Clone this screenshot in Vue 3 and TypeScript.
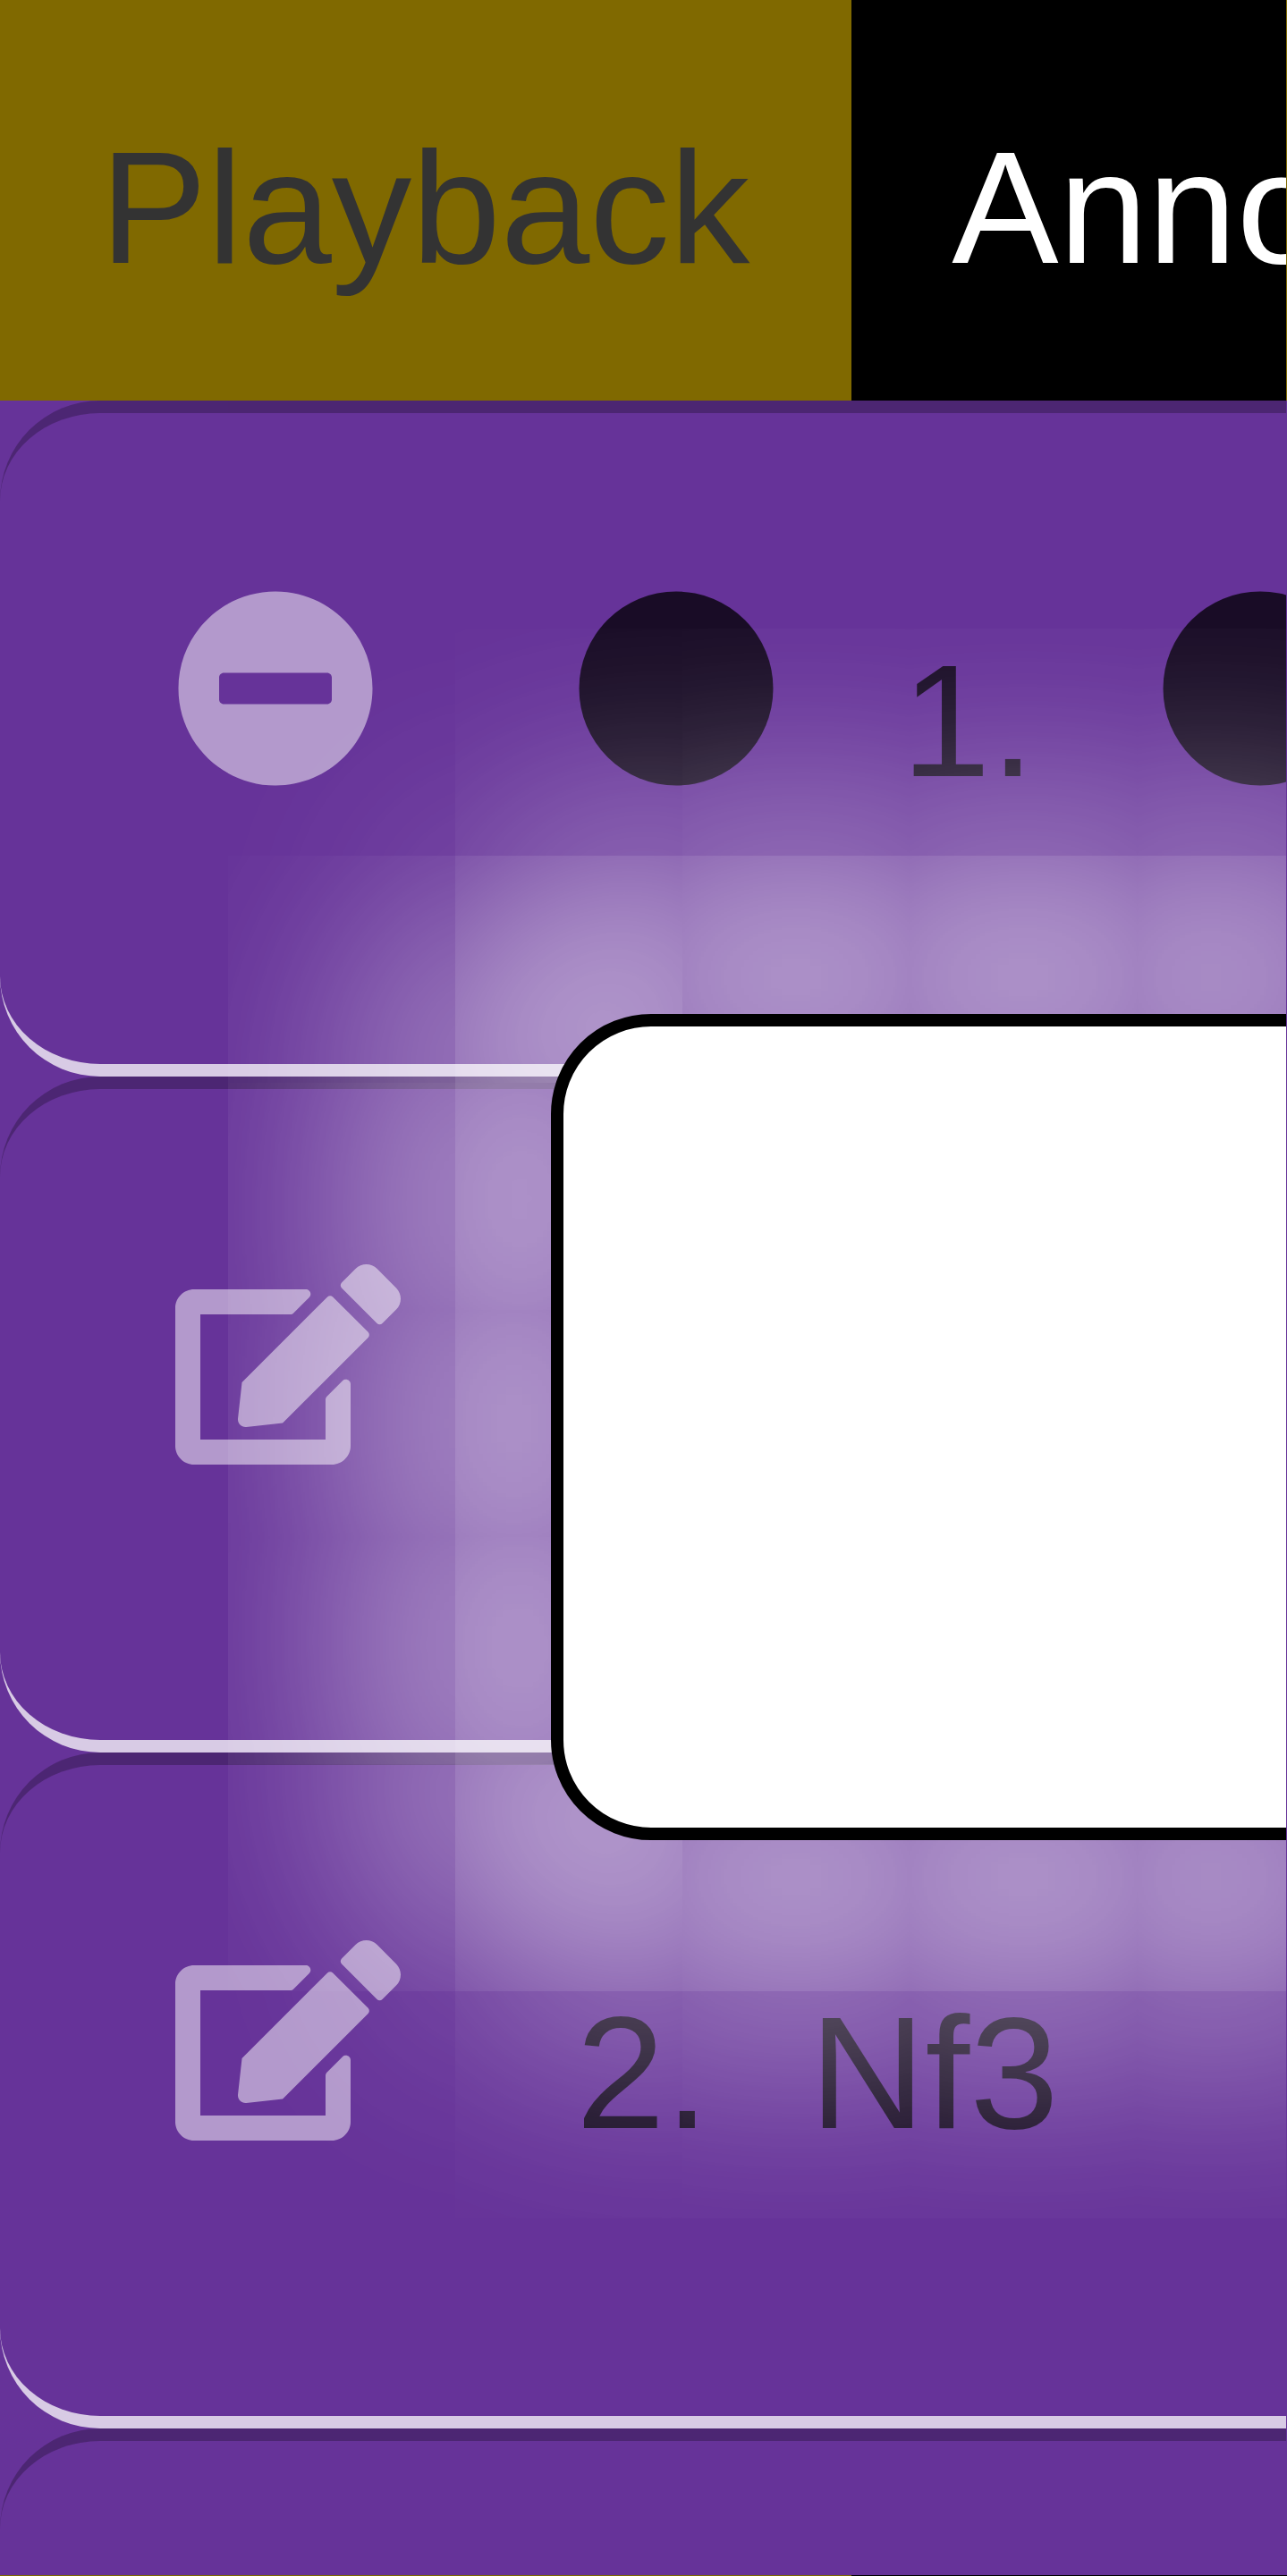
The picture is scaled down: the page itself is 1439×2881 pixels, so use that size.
<script setup lang="ts">
type Token = { kind: 'dot' } | { kind: 'text'; text: string }
interface Row {
  id: number
  icon: 'minus' | 'edit' | null
  wide?: boolean
  tokens: Token[]
}

const rows: Row[] = [
  { id: 1, icon: 'minus', wide: true, tokens: [{ kind: 'dot' }, { kind: 'text', text: '1.' }, { kind: 'dot' }] },
  { id: 2, icon: 'edit', tokens: [] },
  { id: 3, icon: 'edit', tokens: [{ kind: 'text', text: '2.' }, { kind: 'text', text: 'Nf3' }] },
  { id: 4, icon: null, tokens: [] },
]
</script>

<template>
  <main class="page">
    <nav class="tabs">
      <button class="tab" type="button">Playback</button>
      <button class="tab active" type="button">Annotate</button>
    </nav>
    <section class="panel">
      <div v-for="row in rows" :key="row.id" class="row">
        <div class="tool">
          <button v-if="row.icon === 'minus'" type="button" aria-label="Collapse">
            <svg class="icon" viewBox="0 0 512 512">
              <path d="M256 8C119 8 8 119 8 256s111 248 248 248 248-111 248-248S393 8 256 8zM124 296c-6.600 0-12-5.400-12-12v-56c0-6.600 5.400-12 12-12h264c6.600 0 12 5.400 12 12v56c0 6.600-5.400 12-12 12H124z" />
            </svg>
          </button>
          <button v-else-if="row.icon === 'edit'" type="button" aria-label="Edit">
            <svg class="icon" viewBox="0 0 576 512">
              <path d="M402.600 83.200l90.200 90.200c3.800 3.800 3.800 10 0 13.800L274.400 405.600l-92.800 10.300c-12.400 1.400-22.900-9.100-21.500-21.500l10.300-92.800L388.800 83.200c3.800-3.800 10-3.800 13.800 0zm162-22.900l-48.800-48.800c-15.200-15.200-39.900-15.200-55.200 0l-35.400 35.400c-3.800 3.800-3.800 10 0 13.800l90.200 90.200c3.800 3.800 10 3.800 13.800 0l35.400-35.400c15.200-15.300 15.200-40 0-55.200zM384 346.200V448H64V128h229.800c3.200 0 6.200-1.300 8.500-3.500l40-40c7.600-7.600 2.200-20.500-8.500-20.500H48C21.500 64 0 85.500 0 112v352c0 26.500 21.500 48 48 48h352c26.500 0 48-21.500 48-48V306.200c0-10.700-12.900-16-20.500-8.500l-40 40c-2.200 2.300-3.500 5.300-3.500 8.500z" />
            </svg>
          </button>
        </div>
        <div class="moves" :class="{ wide: row.wide }">
          <template v-for="(token, i) in row.tokens" :key="i">
            <svg v-if="token.kind === 'dot'" class="icon dot" viewBox="0 0 512 512">
              <circle cx="256" cy="256" r="248" />
            </svg>
            <span v-else>{{ token.text }}</span>
          </template>
        </div>
      </div>
      <div class="glow"></div>
      <div class="popup" role="dialog"></div>
    </section>
    <div class="strip"></div>
  </main>
</template>

<style>
body {
  margin: 0;
  background: #663399;
}
</style>

<style scoped>
.page {
  display: flex;
  flex-direction: column;
  height: 100vh;
  overflow: hidden;
  background: #663399;
  font-family: "Liberation Sans", Arial, sans-serif;
  font-size: 179px;
  line-height: 296px;
}
button {
  margin: 0;
  padding: 0;
  border: 0;
  background: none;
  color: inherit;
  font: inherit;
}
.tabs {
  display: flex;
  flex: none;
  height: 448px;
  border-right: 1px solid #806900;
  overflow: hidden;
}
.tab {
  flex: none;
  padding: 16px 114px 0 112px;
  background: #806900;
  color: #333333;
}
.tab.active {
  flex: 1 0 auto;
  background: #000000;
  color: #ffffff;
}
.panel {
  position: relative;
  flex: 1;
  min-height: 0;
  margin-right: 1px;
  overflow: hidden;
  background: #663399;
  will-change: transform;
}
.row {
  display: flex;
  align-items: flex-start;
  box-sizing: border-box;
  height: 756px;
  padding: 196px 0 0 196px;
  border: 0 solid transparent;
  border-top: 14px solid rgba(0, 0, 0, 0.25);
  border-bottom: 14px solid rgba(255, 255, 255, 0.75);
  border-radius: 112px 0 0 112px;
}
.tool {
  flex: none;
  width: 448px;
  color: rgba(255, 255, 255, 0.5);
}
.tool button {
  display: block;
}
.icon {
  display: block;
  flex: none;
  height: 224px;
  fill: currentColor;
}
.moves {
  display: flex;
  gap: 112px;
  color: rgba(0, 0, 0, 0.75);
}
.moves.wide {
  gap: 140px;
}
.popup,
.glow {
  position: absolute;
  top: 686px;
  left: 616px;
  right: -448px;
  box-sizing: border-box;
  height: 924px;
}
.popup {
  border: 14px solid #000000;
  border-radius: 112px;
  background: #ffffff;
}
.glow {
  border-radius: 128px;
  box-shadow: 0 0 700px 210px rgba(255, 255, 255, 0.56);
}
.strip {
  flex: none;
  height: 1px;
  background: linear-gradient(90deg, #806900 952px, #000000 952px);
}
</style>
